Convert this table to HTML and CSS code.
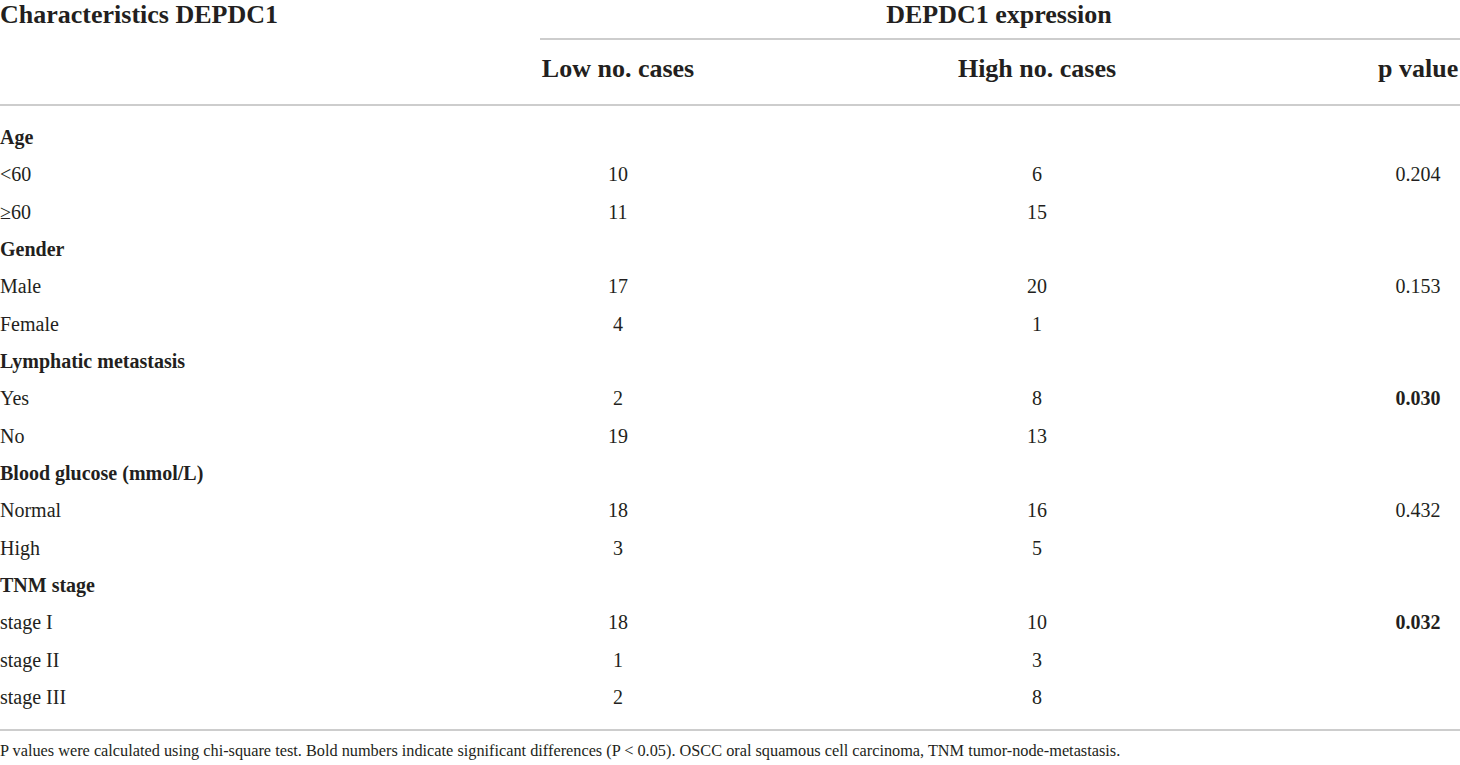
FILE: index.html
```html
<!DOCTYPE html>
<html lang="en">

<head>
    <meta charset="UTF-8">
    <meta name="viewport" content="width=device-width, initial-scale=1.0">
    <title>DEPDC1 expression and characteristics</title>
    <link rel="stylesheet" href="styles.css">
</head>

<body>
    <div class="data-table">
        <div class="table-head">
            <div class="row head-top">
                <div class="cell label">Characteristics DEPDC1</div>
                <div class="cell group">DEPDC1 expression</div>
            </div>
            <div class="row head-sub">
                <div class="cell label"></div>
                <div class="cell">Low no. cases</div>
                <div class="cell">High no. cases</div>
                <div class="cell">p value</div>
            </div>
        </div>

        <div class="table-body">
            <div class="row section"><div class="cell label">Age</div></div>
            <div class="row">
                <div class="cell label">&lt;60</div>
                <div class="cell">10</div>
                <div class="cell">6</div>
                <div class="cell">0.204</div>
            </div>
            <div class="row">
                <div class="cell label">≥60</div>
                <div class="cell">11</div>
                <div class="cell">15</div>
                <div class="cell"></div>
            </div>

            <div class="row section"><div class="cell label">Gender</div></div>
            <div class="row">
                <div class="cell label">Male</div>
                <div class="cell">17</div>
                <div class="cell">20</div>
                <div class="cell">0.153</div>
            </div>
            <div class="row">
                <div class="cell label">Female</div>
                <div class="cell">4</div>
                <div class="cell">1</div>
                <div class="cell"></div>
            </div>

            <div class="row section"><div class="cell label">Lymphatic metastasis</div></div>
            <div class="row">
                <div class="cell label">Yes</div>
                <div class="cell">2</div>
                <div class="cell">8</div>
                <div class="cell strong">0.030</div>
            </div>
            <div class="row">
                <div class="cell label">No</div>
                <div class="cell">19</div>
                <div class="cell">13</div>
                <div class="cell"></div>
            </div>

            <div class="row section"><div class="cell label">Blood glucose (mmol/L)</div></div>
            <div class="row">
                <div class="cell label">Normal</div>
                <div class="cell">18</div>
                <div class="cell">16</div>
                <div class="cell">0.432</div>
            </div>
            <div class="row">
                <div class="cell label">High</div>
                <div class="cell">3</div>
                <div class="cell">5</div>
                <div class="cell"></div>
            </div>

            <div class="row section"><div class="cell label">TNM stage</div></div>
            <div class="row">
                <div class="cell label">stage I</div>
                <div class="cell">18</div>
                <div class="cell">10</div>
                <div class="cell strong">0.032</div>
            </div>
            <div class="row">
                <div class="cell label">stage II</div>
                <div class="cell">1</div>
                <div class="cell">3</div>
                <div class="cell"></div>
            </div>
            <div class="row">
                <div class="cell label">stage III</div>
                <div class="cell">2</div>
                <div class="cell">8</div>
                <div class="cell"></div>
            </div>
        </div>

        <p class="footnote">P values were calculated using chi-square test. Bold numbers indicate significant differences (P &lt; 0.05). OSCC oral squamous cell carcinoma, TNM tumor-node-metastasis.</p>
    </div>
</body>

</html>
```

FILE: styles.css
```css
body {
    margin: 0;
    background: #fff;
    color: #231f20;
    font-family: "Liberation Serif", "Times New Roman", serif;
}

.data-table {
    width: 1460px;
}

.row {
    display: grid;
    grid-template-columns: 281px 156px 164px 80px;
    column-gap: 259px;
}

.cell {
    text-align: center;
    white-space: nowrap;
}

.cell.label {
    text-align: left;
}

/* header */

.table-head {
    font-size: 26px;
    font-weight: bold;
    line-height: 29px;
    border-bottom: 2px solid #cdcdcd;
}

.head-top .cell {
    padding-bottom: 9px;
}

.head-top .group {
    grid-column: 2 / 5;
    margin-right: -2px;
    padding-right: 2px;
    border-bottom: 2px solid #cdcdcd;
}

.head-sub .cell {
    padding-top: 14px;
    padding-bottom: 21px;
}

/* body */

.table-body {
    font-size: 20px;
    line-height: 37.33px;
    padding: 13px 0 13px;
    border-bottom: 2px solid #cdcdcd;
}

.section .label {
    font-weight: bold;
}

.strong {
    font-weight: bold;
}

.footnote {
    margin: 0;
    padding-top: 9px;
    font-size: 16.3px;
    line-height: 22px;
    white-space: nowrap;
}
```
